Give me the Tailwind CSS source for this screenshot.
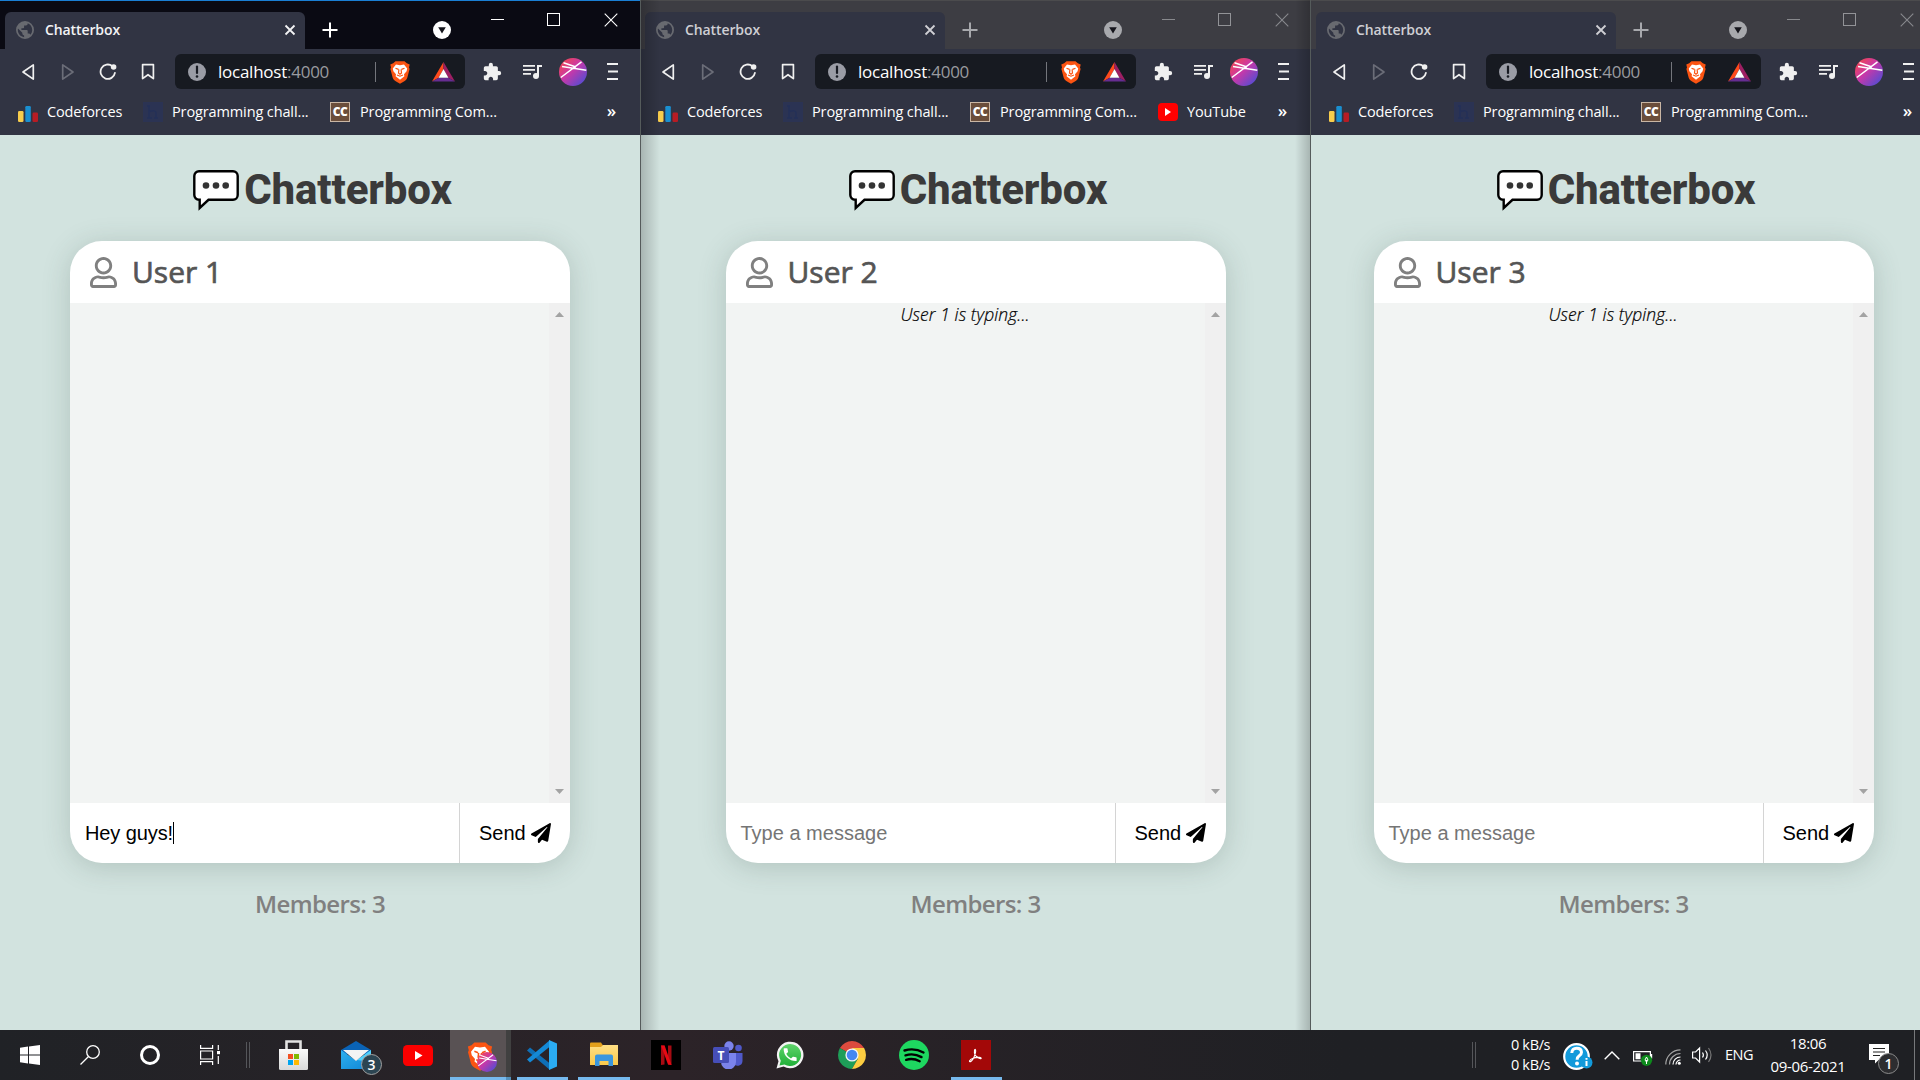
<!DOCTYPE html>
<html lang="en">
<head>
<meta charset="utf-8">
<title>Chatterbox</title>
<script src="https://cdn.jsdelivr.net/npm/@tailwindcss/browser@4"></script>
</head>
<body class="w-[1920px] h-[1080px] overflow-hidden bg-[#d2e3df] font-['Open_Sans',sans-serif]">
<svg class="absolute size-0">
  <defs>
    <linearGradient id="av" x1="0" y1="0" x2="1" y2="1"><stop offset="0" stop-color="#fb4a3c"/><stop offset=".45" stop-color="#c938a8"/><stop offset="1" stop-color="#3b50dc"/></linearGradient>
    <linearGradient id="bag" x1="0" y1="0" x2="0" y2="1"><stop offset="0" stop-color="#fafafa"/><stop offset="1" stop-color="#d9d9d9"/></linearGradient>
    <linearGradient id="mailg" x1="0" y1="0" x2="1" y2="1"><stop offset="0" stop-color="#2fb0ee"/><stop offset="1" stop-color="#0f86d6"/></linearGradient>
    <linearGradient id="fold" x1="0" y1="0" x2="0" y2="1"><stop offset="0" stop-color="#ffdf84"/><stop offset="1" stop-color="#fbc94a"/></linearGradient>
    <linearGradient id="wa" x1="0" y1="0" x2="0" y2="1"><stop offset="0" stop-color="#60d46c"/><stop offset="1" stop-color="#20b038"/></linearGradient>
  </defs>
  <symbol id="globe" viewBox="2 2 20 20"><path fill="currentColor" d="M17.9,17.39C17.64,16.59 16.89,16 16,16H15V13A1,1 0 0,0 14,12H8V10H10A1,1 0 0,0 11,9V7H13A2,2 0 0,0 15,5V4.59C17.93,5.77 20,8.64 20,12C20,14.08 19.2,15.97 17.9,17.39M11,19.93C7.05,19.44 4,16.08 4,12C4,11.38 4.08,10.78 4.21,10.21L9,15V16A2,2 0 0,0 11,18M12,2A10,10 0 0,0 2,12A10,10 0 0,0 12,22A10,10 0 0,0 22,12A10,10 0 0,0 12,2Z"/></symbol>
  <symbol id="x" viewBox="0 0 12 12"><path d="M1.5 1.5l9 9m0-9l-9 9" stroke="currentColor" stroke-width="1.8"/></symbol>
  <symbol id="xthin" viewBox="0 0 14 14"><path d="M.7.7l12.6 12.6m0-12.6L.7 13.3" stroke="currentColor" stroke-width="1.1"/></symbol>
  <symbol id="plus" viewBox="0 0 16 16"><path d="M8 .5v15M.5 8h15" stroke="currentColor" stroke-width="2"/></symbol>
  <symbol id="drop" viewBox="0 0 18 18"><circle cx="9" cy="9" r="9" fill="currentColor"/><path d="M5.2 6.3h7.6L9 12.6z" fill="#15151c"/></symbol>
  <symbol id="back" viewBox="0 0 14 18"><path d="M12.3 1.9v14.2L2 9z" fill="none" stroke="currentColor" stroke-width="1.7" stroke-linejoin="round"/></symbol>
  <symbol id="reload" viewBox="0 0 18 18"><path d="M13.4 3.2A7.2 7.2 0 1 0 15.9 9.8" fill="none" stroke="currentColor" stroke-width="1.8" stroke-linecap="round"/><circle cx="14.6" cy="4" r="2.8" fill="currentColor"/></symbol>
  <symbol id="mark" viewBox="0 0 14 18"><path d="M1.6 1.6h10.8v14L7 11.7l-5.400 3.900z" fill="none" stroke="currentColor" stroke-width="1.7" stroke-linejoin="round"/></symbol>
  <symbol id="info" viewBox="0 0 18 18"><circle cx="9" cy="9" r="9" fill="#9a9ca5"/><path d="M9 3.600v6.400" stroke="#171a22" stroke-width="2.200" stroke-linecap="round"/><circle cx="9" cy="13.500" r="1.300" fill="#171a22"/></symbol>
  <symbol id="brave" viewBox="0 0 20 24"><path fill="#fb5412" d="M5.500 1.200h9L16.800 3.300l2.900 1.100-.700 3 .600 1.500-2.300 8.900c-.500 1.500-1.500 2.500-3 3.500L10 23.700l-4.300-2.400c-1.500-1-2.500-2-3-3.500L.400 8.900 1 7.400.300 4.400l2.900-1.100z"/><path fill="#fff" d="M6 4.500l4 .700 4-.700 3.200 4-.600 2.800-2.600 3 .400 2L10 19.700l-4.400-3.400.400-2-2.600-3L2.800 8.500z"/><path d="M5.500 8.200l3 1.200M14.500 8.200l-3 1.200M8.900 9.500l-.400 3.500L10 14.300l1.500-1.300-.400-3.500M7 15l3 1.200 3-1.200" fill="none" stroke="#fb5412" stroke-width="1.200"/></symbol>
  <symbol id="bat" viewBox="0 0 23 20"><path d="M11.500 0L0 19.500l6.700-3.700 4.800-8.800z" fill="#ff4a1c"/><path d="M11.500 0L23 19.500l-6.700-3.700-4.800-8.800z" fill="#9e1f63"/><path d="M0 19.500h23l-6.700-3.700H6.700z" fill="#662d91"/><path d="M11.500 7l4.900 8.800H6.600z" fill="#fff"/></symbol>
  <symbol id="puzzle" viewBox="1 0 23 23"><path fill="currentColor" d="M20.5,11H19V7C19,5.890 18.100,5 17,5H13V3.500A2.500,2.500 0 0,0 10.500,1A2.500,2.500 0 0,0 8,3.500V5H4A2,2 0 0,0 2,7V10.800H3.500C5,10.800 6.200,12 6.200,13.500C6.200,15 5,16.200 3.500,16.200H2V20A2,2 0 0,0 4,22H7.800V20.500C7.800,19 9,17.800 10.500,17.800C12,17.800 13.200,19 13.200,20.500V22H17A2,2 0 0,0 19,20V16H20.500A2.500,2.500 0 0,0 23,13.500A2.500,2.500 0 0,0 20.500,11Z"/></symbol>
  <symbol id="music" viewBox="3 5 19 16"><path fill="currentColor" d="M15,6H3V7.700H15V6M15,10H3V11.700H15V10M3,15.700H11V14H3V15.700M17,6V14.180C16.690,14.070 16.350,14 16,14A3,3 0 0,0 13,17A3,3 0 0,0 16,20A3,3 0 0,0 19,17V8H22V6H17Z"/></symbol>
  <symbol id="avatar" viewBox="0 0 28 28"><circle cx="14" cy="14" r="14" fill="url(#av)"/><path d="M3 8.500l24.300 3.800M1.800 19.500L22.500 3.800M4.500 4.700L17 9" stroke="#fff" stroke-width="1.500"/></symbol>
  <symbol id="menu" viewBox="0 0 11 17"><path d="M0 1h11M1 8.500H11M0 16h11" stroke="currentColor" stroke-width="1.800"/></symbol>
  <symbol id="cf" viewBox="0 0 20 16"><rect x="0" y="5" width="5.500" height="11" rx="1.200" fill="#f8cd4c"/><rect x="7.300" y="0" width="5.500" height="16" rx="1.200" fill="#1a8fd0"/><rect x="14.500" y="6.500" width="5.500" height="9.500" rx="1.200" fill="#b71c24"/></symbol>
  <symbol id="he" viewBox="0 0 20 20"><rect width="20" height="20" fill="#2b3353"/><path d="M6 4v12M6 9.500q7-2 7 1.500v5M4 4h3M4 16h5M11 16h4" fill="none" stroke="#243058" stroke-width="1.500"/></symbol>
  <symbol id="yt" viewBox="0 0 30 21"><rect width="30" height="21" rx="4.500" fill="#fb0000"/><path d="M12 6v9l7.500-4.500z" fill="#fff"/></symbol>
  <symbol id="bubble" viewBox="0 0 46 41"><path d="M6 1.200h34a4.700 4.700 0 0 1 4.700 4.700v19.200a4.700 4.700 0 0 1-4.700 4.700H15.500L6.700 38v-8.200H6a4.700 4.700 0 0 1-4.700-4.700V5.900A4.700 4.700 0 0 1 6 1.200z" fill="#fff" stroke="#000" stroke-width="2.400"/><g fill="#333"><circle cx="13" cy="15.500" r="3.300"/><circle cx="23" cy="15.500" r="3.300"/><circle cx="32.700" cy="15.500" r="3.300"/></g></symbol>
  <symbol id="user" viewBox="0 0 448 512"><path fill="currentColor" d="M313.600 304c-28.700 0-42.500 16-89.600 16-47.100 0-60.800-16-89.600-16C60.200 304 0 364.200 0 438.400V464c0 26.500 21.500 48 48 48h352c26.500 0 48-21.500 48-48v-25.600c0-74.200-60.200-134.400-134.400-134.400zM400 464H48v-25.600c0-47.600 38.800-86.400 86.400-86.400 14.600 0 38.300 16 89.600 16 51.700 0 74.900-16 89.600-16 47.600 0 86.400 38.800 86.400 86.400V464zM224 288c79.500 0 144-64.500 144-144S303.500 0 224 0 80 64.500 80 144s64.500 144 144 144zm0-240c52.900 0 96 43.100 96 96s-43.100 96-96 96-96-43.100-96-96 43.100-96 96-96z"/></symbol>
  <symbol id="plane" viewBox="0 0 512 512"><path d="M476 3.200L12.500 270.600c-18.100 10.400-15.800 35.600 2.200 43.200L121 358.400l287.300-253.200c5.500-4.900 13.300 2.600 8.600 8.300L176 407v80.500c0 23.600 28.500 32.900 42.500 15.800L282 426l124.600 52.200c14.200 6 30.400-2.900 33-18.200l72-432C515 7.800 493.300-6.800 476 3.200z"/></symbol>
</svg>

<main id="desktop" class="flex h-[1030px] w-[1936px]"></main>

<footer class="flex h-[50px] w-[1920px] items-center bg-linear-to-r from-[#202226] via-[#2c2328] via-35% to-[#1f2024] to-70% text-white">
  <div class="flex h-full w-[240px] items-center">
    <div class="flex w-[60px] justify-center"><svg class="size-5" viewBox="0 0 20 20" fill="#fff"><path d="M0 2.700l8-1.100v7.900H0zM9 1.400L20 0v9.500H9zM0 10.500h8v7.900l-8-1.100zM9 10.500h11V20L9 18.600z"/></svg></div>
    <div class="flex w-[60px] justify-center"><svg class="size-5" viewBox="0 0 20 20" fill="none" stroke="#fff" stroke-width="1.300"><circle cx="13" cy="7" r="6.300"/><path d="M8.500 11.500L.5 19.500"/></svg></div>
    <div class="flex w-[60px] justify-center"><div class="size-5 rounded-full border-[3px] border-white"></div></div>
    <div class="flex w-[60px] justify-center"><svg class="size-5" viewBox="0 0 20 20" fill="none" stroke="#fff" stroke-width="1.200"><path d="M.6 0v3.400h12V0M.6 20v-3.400h12V20M.6 6h12v8H.6zM18.300 0v5M18.300 11v8"/><path d="M17 6h3v3.200h-3z" fill="#fff" stroke="none"/></svg></div>
  </div>
  <div class="flex w-[23px] pl-1.5"><div class="h-[26px] w-1 border-x border-[#55565a]"></div></div>
  <div class="flex h-full">
    <div class="flex w-[62px] items-center justify-center pr-px"><svg class="h-[30px] w-[29px]" viewBox="0 0 29 30"><path d="M7.500 10V1.500h14V10" fill="none" stroke="#e3e3e3" stroke-width="2.600"/><path d="M0 9h29v19.500a1.500 1.500 0 0 1-1.500 1.500h-26A1.500 1.500 0 0 1 0 28.500z" fill="url(#bag)"/><path d="M9 14h5v5H9z" fill="#f25022"/><path d="M15 14h5v5h-5z" fill="#7fba00"/><path d="M9 20h5v5H9z" fill="#00a4ef"/><path d="M15 20h5v5h-5z" fill="#ffb900"/></svg></div>
    <div class="relative flex w-[62px] items-center justify-center"><svg class="h-[28px] w-[30px]" viewBox="0 0 30 28"><path d="M0 9L15 0l15 9v4H0z" fill="#0a63b6"/><path d="M0 9l15 10.500L30 9v19H0z" fill="url(#mailg)"/><path d="M16 19L30 9v12z" fill="#50d0fb"/><path d="M2 9h26L15 20z" fill="#f4f4f4"/></svg><div class="absolute left-[36px] top-6 flex size-[21px] items-center justify-center rounded-full border border-[#a0a0a0] bg-[#2c4552] text-sm font-semibold">3</div></div>
    <div class="flex w-[62px] items-center justify-center"><svg class="h-[21px] w-[30px]"><use href="#yt"/></svg></div>
    <div class="relative ml-px flex w-[56px] items-center justify-center border-b-[3px] border-[#76b9ed] bg-[#595254] pl-1"><svg class="mt-1 h-[30px] w-[26px]"><use href="#brave"/></svg><svg class="absolute left-[27px] top-[22px] size-5"><use href="#avatar"/></svg></div>
    <div class="mr-[6px] h-full w-[5px] border-b-[3px] border-[#5390bb] bg-[#404040]"></div>
    <div class="mr-[10px] flex w-[51px] items-center justify-center border-b-[3px] border-[#76b9ed] pr-px pt-[3px]"><svg class="size-[30px]" viewBox="0 0 30 30"><path d="M0 10.500L3 7.500l20 16V30z" fill="#0f6fb6"/><path d="M0 19.500l3 3L23 6.500V0z" fill="#1489d6"/><path d="M22 0l8 3.500v23L22 30z" fill="#2bacf3"/></svg></div>
    <div class="flex w-[52px] items-center justify-center border-b-[3px] border-[#76b9ed]"><svg class="h-6 w-7" viewBox="0 0 28 24"><path d="M0 1.500Q0 .5 1 .5h10l2 3V6H0z" fill="#e3a01b"/><path d="M0 5h11l2-2h15v20H0z" fill="url(#fold)"/><path d="M5 24v-9.500q0-2 2-2h14q2 0 2 2V24h-4.500v-5h-9v5z" fill="#3b96dd"/></svg></div>
    <div class="ml-[5px] flex w-[62px] items-center justify-center"><svg class="size-[30px]" viewBox="0 0 30 30"><path d="M0 0h30v30H0z"/><path d="M10 5.500h3.500v19L10 25zM17 5.500h3.500V25l-3.500-.500z" fill="#a50b12"/><path d="M10 5.500h3.600L20.500 25 17 24.500z" fill="#e50914"/></svg></div>
    <div class="flex w-[62px] items-center justify-center"><svg class="h-[28px] w-[30px]" viewBox="0 0 30 28"><circle cx="25.500" cy="7" r="3.300" fill="#5059c9"/><path d="M20 12h9.500v8a5 5 0 0 1-9.500 2z" fill="#5059c9"/><circle cx="16" cy="5" r="4.700" fill="#7b83eb"/><path d="M8 12h15v9a7 7 0 0 1-15 0z" fill="#7b83eb"/><rect y="6" width="16" height="16" rx="1.500" fill="#464eb8"/><text x="8" y="18.500" text-anchor="middle" class="fill-white text-[12px] font-bold">T</text></svg></div>
    <div class="flex w-[62px] items-center justify-center"><svg class="size-[28px]" viewBox="0 0 28 28"><path d="M.500 27.500l2-7.200a13.300 13.300 0 1 1 5.100 5.200z" fill="#f3f3f3"/><path d="M3.500 24.500l1.300-4.700a11 11 0 1 1 3.700 3.600z" fill="url(#wa)"/><path transform="translate(5.500 5) scale(.72)" fill="#fff" d="M6.620,10.790C8.060,13.620 10.380,15.940 13.210,17.380L15.410,15.180C15.690,14.900 16.080,14.820 16.430,14.930C17.550,15.300 18.750,15.500 20,15.500A1,1 0 0,1 21,16.500V20A1,1 0 0,1 20,21A17,17 0 0,1 3,4A1,1 0 0,1 4,3H7.500A1,1 0 0,1 8.500,4C8.500,5.250 8.700,6.450 9.070,7.570C9.180,7.920 9.100,8.310 8.820,8.590L6.620,10.790Z"/></svg></div>
    <div class="flex w-[62px] items-center justify-center"><svg class="size-[28px]" viewBox="0 0 28 28"><path d="M14 14L1.900 7A14 14 0 0 1 26.100 7z" fill="#dd4b3e"/><path d="M14 14L1.900 7A14 14 0 0 0 14 28l6-10.500z" fill="#1e9e58"/><path d="M14 7h12.100A14 14 0 0 1 14 28l6-10.500z" fill="#fdcd41"/><circle cx="14" cy="14" r="6.600" fill="#f4f4f4"/><circle cx="14" cy="14" r="5.300" fill="#4587f3"/></svg></div>
    <div class="flex w-[62px] items-center justify-center"><svg class="size-[30px]" viewBox="0 0 30 30"><circle cx="15" cy="15" r="15" fill="#1ed760"/><path d="M5.500 10.500q10-3 19 2M6.500 15.300q8.500-2.500 16 1.800M7.200 19.800q7-2 13.500 1.500" fill="none" stroke="#000" stroke-width="2.400" stroke-linecap="round"/></svg></div>
    <div class="ml-[6px] flex w-[51px] items-center justify-center border-b-[3px] border-[#76b9ed] pr-px pt-[3px]"><svg class="size-[30px]" viewBox="0 0 30 30"><path d="M0 0h30v30H0z" fill="#a30808"/><path d="M8.500 21c1-2.300 5.500-4 10-3.600 3 .500 1.500 1.900-.500.900-3.700-1.800-5-5.300-4.500-8.300.700-1.400 1.400 0 1.100 1.800-.800 4-2.700 8-4.500 9.400-1 .700-1.800.500-1.600-.200z" fill="none" stroke="#fff" stroke-width="1.100"/></svg></div>
  </div>
  <div class="ml-auto flex h-full items-center">
    <div class="h-[26px] w-1 border-x border-[#55565a]"></div>
    <div class="ml-[35px] w-[40px] whitespace-nowrap text-[14.500px] leading-5 tracking-[-0.350px]">0 kB/s<br>0 kB/s</div>
    <svg class="ml-3 mt-1 h-7 w-[30px]" viewBox="0 0 30 28"><circle cx="13.500" cy="13.500" r="12.300" fill="#129adb" stroke="#fff" stroke-width="2.200"/><path d="M8.800 10q.3-4.700 4.900-4.700t4.800 4q0 2.200-2.500 3.800-1.900 1.300-1.900 3.600" fill="none" stroke="#fff" stroke-width="3"/><circle cx="14" cy="20.500" r="2" fill="#fff"/><circle cx="23.500" cy="19.500" r="6" fill="#129adb"/><path d="M23.500 18v5M23.500 15v1.700" stroke="#fff" stroke-width="2"/></svg>
    <svg class="ml-[11px] h-[9px] w-4" viewBox="0 0 16 9"><path d="M.7 8.300L8 1l7.300 7.300" fill="none" stroke="#fff" stroke-width="1.400"/></svg>
    <svg class="ml-[13px] mt-1.5 h-4 w-5" viewBox="0 0 20 16"><path d="M.6 1.600h16.800V11H.6z" fill="none" stroke="#fff" stroke-width="1.200"/><path d="M2.500 3.300h5v6h-5zM18 4h1.200v4.500H18z" fill="#fff"/><circle cx="13.500" cy="10.300" r="5.600" fill="#0d8a1c"/><path d="M13.500 7q-3 3.500 0 5 3-1.500 0-5zM13.500 10v4" fill="none" stroke="#fff"/></svg>
    <svg class="ml-3 mt-1 size-4" viewBox="0 0 16 16" fill="none" stroke-width="1.200"><path d="M.8 15.500A14.700 14.700 0 0 1 15.500.8M4.500 15.500a11 11 0 0 1 11-11" stroke="#a5a5a5"/><path d="M8 15.500A7.500 7.500 0 0 1 15.500 8M11 15.500a4.500 4.500 0 0 1 4.500-4.500" stroke="#fff"/><circle cx="14.300" cy="14.300" r="1.500" fill="#fff"/></svg>
    <svg class="ml-[11px] h-[18px] w-[21px]" viewBox="0 0 21 18" fill="none" stroke="#fff" stroke-width="1.200"><path d="M.6 6h3l4-4v14l-4-4h-3zM10.500 6.500q1.800 2.500 0 5M13.500 4.500q3.400 4.500 0 9"/><path d="M16.500 2q5 7 0 14" stroke="#777"/></svg>
    <div class="ml-[12px] w-[30px] whitespace-nowrap text-[14.500px] tracking-[-0.450px]">ENG</div>
    <div class="ml-[13px] w-[80px] whitespace-nowrap text-center text-[15px] leading-[23px] tracking-[-0.350px]">18:06<br>09-06-2021</div>
    <div class="relative ml-[21px] size-[30px]"><svg class="mt-1 h-5 w-5" viewBox="0 0 20 20"><path d="M0 0h20v16H9.500L6 19.500V16H0z" fill="#fff"/><path d="M4 4.500h12M4 8h12M4 11.500h7" stroke="#222" stroke-width="1.200"/></svg><div class="absolute left-[9px] top-[13px] flex size-[21px] items-center justify-center rounded-full border border-[#8b8b8b] bg-[#2d2d30] text-sm font-semibold">1</div></div>
    <div class="ml-[15px] h-full border-l border-[#77787b] pl-[5px]"></div>
  </div>
</footer>

<script>
const icon = (id, cls) => `<svg class="${cls}"><use href="#${id}"/></svg>`;

const windows = [
  { user: 'User 1', size: 'w-[640px]', active: true, draft: 'Hey guys!' },
  { user: 'User 2', size: 'w-[671px]', youtube: true, typing: 'User 1 is typing...' },
  { user: 'User 3', size: 'w-[625px]', typing: 'User 1 is typing...' },
];

const chrome = w => `
  <div class="flex h-[49px] items-start border-t ${w.active ? 'border-[#1a7fd4] bg-[#0a0a13] text-white' : 'border-[#4b4b4d] bg-[#3d3d43] text-[#a8a9ad]'} pl-[5px]">
    <div class="mt-[11px] flex h-[37px] w-[300px] items-center rounded-t-md bg-[#313443] pl-[11px] pr-[9px] ${w.active ? 'text-[#f3f3f5]' : 'text-[#cfcfd4]'}">
      ${icon('globe', 'mb-px size-[18px] text-[#686a70]')}
      <span class="mb-0.5 ml-[11px] text-[14px] font-semibold tracking-[-0.1px]">Chatterbox</span>
      ${icon('x', 'ml-auto mb-px size-3')}
    </div>
    ${icon('plus', 'ml-[17px] mt-[21px] size-4')}
    <div class="ml-auto flex items-start">
      ${icon('drop', 'mt-5 mr-10 size-[18px]')}
      <div class="mt-[18px] mr-[43px] h-px w-[13px] bg-current ${w.active ? '' : 'opacity-70'}"></div>
      <div class="mt-3 mr-11 size-[13px] border border-current ${w.active ? '' : 'opacity-80'}"></div>
      ${icon('xthin', w.active ? 'mt-3 mr-[22px] size-[14px]' : 'mt-3 mr-[22px] size-[14px] opacity-70')}
    </div>
  </div>
  <div class="flex h-[86px] flex-col bg-[#313443] text-[#f0f0f0]">
    <div class="flex h-[45px] items-center">
      ${icon('back', 'ml-[21px] h-[18px] w-[14px]')}
      ${icon('back', 'ml-[26px] h-[18px] w-[14px] -scale-x-100 text-[#6b6d78]')}
      ${icon('reload', 'ml-6 size-[18px]')}
      ${icon('mark', 'ml-6 h-[18px] w-[14px]')}
      <div class="ml-5 mr-[18px] flex h-[35px] flex-1 items-center rounded-md bg-[#171a21] pl-[13px] pr-[10px]">
        ${icon('info', 'size-[18px]')}
        <span class="ml-3 text-[17px] tracking-[-0.25px] text-white">localhost<span class="text-[#9a9b9f]">:4000</span></span>
        <div class="ml-auto mr-[14px] h-5 w-px bg-[#74767c]"></div>
        ${icon('brave', 'mr-[22px] h-6 w-5')}
        ${icon('bat', 'h-5 w-[23px]')}
      </div>
      ${icon('puzzle', 'mr-[21px] size-[19px]')}
      ${icon('music', 'mr-[17px] h-4 w-[19px]')}
      ${icon('avatar', 'mr-5 size-7')}
      ${icon('menu', 'mr-[22px] h-[17px] w-[11px]')}
    </div>
    <div class="flex h-9 items-center whitespace-nowrap text-[14.5px] tracking-[-0.12px] text-white">
      ${icon('cf', 'ml-[18px] mt-[3px] h-4 w-5')}
      <span class="ml-[9px] w-[96px]">Codeforces</span>
      ${icon('he', 'size-5')}
      <span class="ml-[9px] w-[158px]">Programming chall...</span>
      <span class="flex size-5 items-center justify-center border border-[#c9b6a4] bg-[#6b4e3b] text-[12px] font-extrabold tracking-[-0.5px]">CC</span>
      <span class="ml-2.5 w-[158px]">Programming Com...</span>
      ${w.youtube ? `<span class="flex h-[18px] w-5 items-center justify-center rounded bg-[#f00]"><svg class="h-2 w-1.5" viewBox="0 0 6 8" fill="#fff"><path d="M0 0v8l6-4z"/></svg></span><span class="ml-[9px]">YouTube</span>` : ''}
      <span class="ml-auto mr-6 mb-1 text-[17px] font-semibold leading-none">»</span>
    </div>
  </div>`;

const chat = w => `
  <div class="flex flex-1 flex-col items-center bg-[#d2e3df]">
    <h1 class="mt-[27px] flex h-[54px] items-center pl-[5px] font-['Roboto',sans-serif] text-[42px] font-extrabold leading-none tracking-[-0.15px] text-[#3a3a3a]">${icon('bubble', 'mt-0.5 mr-[5px] h-[41px] w-[46px]')}<span class="pt-px">Chatterbox</span></h1>
    <section class="mt-[25px] flex h-[622px] w-[500px] flex-col overflow-hidden rounded-[32px] bg-white shadow-[0_4px_28px_rgba(60,80,75,0.22)]">
      <header class="flex h-[62px] items-center pl-5 text-[#808080]">
        ${icon('user', 'h-[31px] w-[27px]')}
        <h2 class="ml-[15px] text-[30px] font-normal leading-none text-[#555] [-webkit-text-stroke:0.7px_#555]">${w.user}</h2>
      </header>
      <div class="flex h-[500px] bg-[#f2f4f3]">
        <p class="flex-1 pt-px text-center text-[17.5px] leading-5 font-light italic tracking-[0.1px] text-black [-webkit-text-stroke:0.2px_#000]">${w.typing || ''}</p>
        <div class="flex w-[21px] flex-col items-center justify-between bg-[#f0f0f0] py-[9px] text-[#a3a3a3]">
          <svg class="h-[5px] w-[9px]" viewBox="0 0 9 5" fill="currentColor"><path d="M0 5h9L4.500 0z"/></svg>
          <svg class="h-[5px] w-[9px]" viewBox="0 0 9 5" fill="currentColor"><path d="M0 0h9L4.500 5z"/></svg>
        </div>
      </div>
      <div class="flex h-[60px] font-['Liberation_Sans',sans-serif] text-[20px] text-black">
        <div class="flex w-[390px] items-center border-r border-[#d4d4d4] pl-[15px]">${w.draft ? `<span class="tracking-[-0.1px]">${w.draft}</span><span class="h-[22px] w-px bg-black"></span>` : '<span class="text-[#757575]">Type a message</span>'}</div>
        <div class="flex flex-1 items-center pl-[19px]">Send${icon('plane', 'ml-[5px] size-5')}</div>
      </div>
    </section>
    <p class="mt-[25px] text-[24px] font-semibold leading-8 tracking-[-0.6px] text-[#808080]">Members: 3</p>
  </div>`;

document.getElementById('desktop').innerHTML = windows.map((w, i) => `
  <article class="relative flex shrink-0 flex-col overflow-hidden ${w.size}">
    ${chrome(w)}${chat(w)}
    ${i === 1 ? `<div class="absolute inset-y-0 left-0 w-5 border-l border-[#555b5b] bg-linear-to-r from-black/20 to-transparent"></div>
    <div class="absolute inset-y-0 right-0 w-4 border-r border-[#555b5b] bg-linear-to-l from-black/20 to-transparent"></div>` : ''}
  </article>`).join('');
</script>
</body>
</html>
